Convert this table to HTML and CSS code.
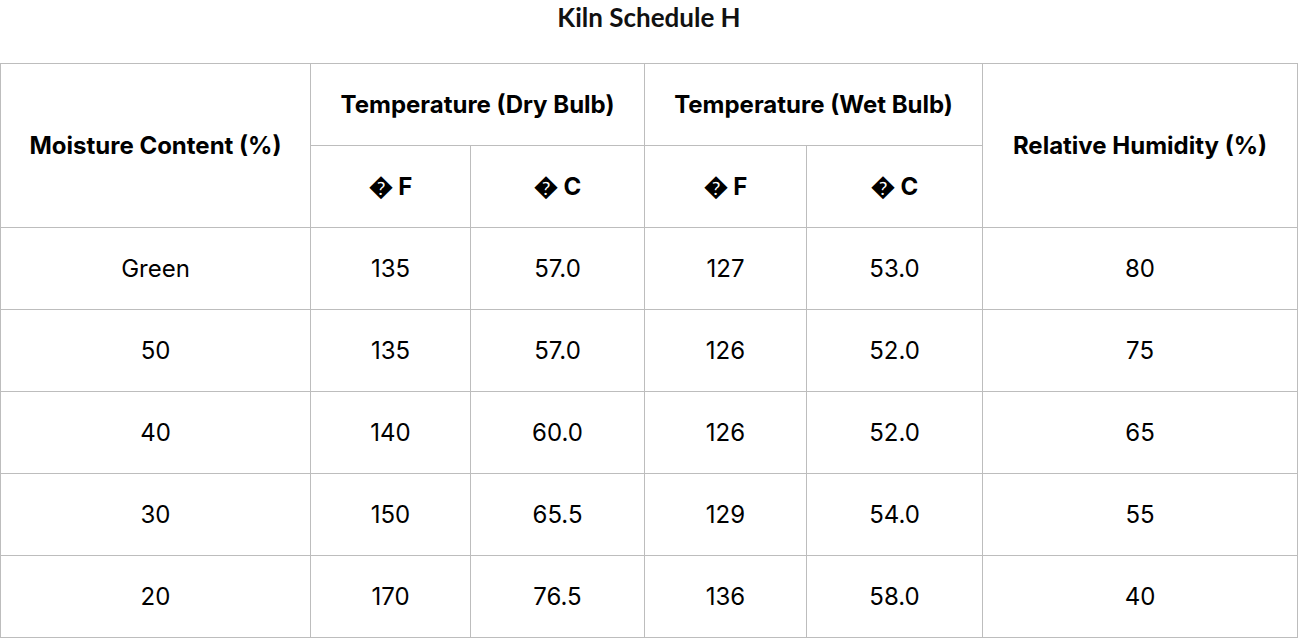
FILE: index.html
```html
<!DOCTYPE html>
<html lang="en">
<head>
<meta charset="utf-8">
<title>Kiln Schedule H</title>
<link rel="stylesheet" href="styles.css">
</head>
<body>
<h1 class="title">Kiln Schedule H</h1>
<table class="kiln">
  <colgroup>
    <col class="c-mc">
    <col class="c-df">
    <col class="c-dc">
    <col class="c-wf">
    <col class="c-wc">
    <col class="c-rh">
  </colgroup>
  <thead>
    <tr>
      <th rowspan="2">Moisture Content (%)</th>
      <th colspan="2">Temperature (Dry Bulb)</th>
      <th colspan="2">Temperature (Wet Bulb)</th>
      <th rowspan="2">Relative Humidity (%)</th>
    </tr>
    <tr>
      <th>&#xFFFD; F</th>
      <th>&#xFFFD; C</th>
      <th>&#xFFFD; F</th>
      <th>&#xFFFD; C</th>
    </tr>
  </thead>
  <tbody>
    <tr><td>Green</td><td>135</td><td>57.0</td><td>127</td><td>53.0</td><td>80</td></tr>
    <tr><td>50</td><td>135</td><td>57.0</td><td>126</td><td>52.0</td><td>75</td></tr>
    <tr><td>40</td><td>140</td><td>60.0</td><td>126</td><td>52.0</td><td>65</td></tr>
    <tr><td>30</td><td>150</td><td>65.5</td><td>129</td><td>54.0</td><td>55</td></tr>
    <tr><td>20</td><td>170</td><td>76.5</td><td>136</td><td>58.0</td><td>40</td></tr>
  </tbody>
</table>
</body>
</html>
```
FILE: styles.css
```css
html, body {
  margin: 0;
  padding: 0;
  background: #ffffff;
}
body {
  font-family: Inter, "Liberation Sans", sans-serif;
  color: #000000;
}
.title {
  margin: 0;
  height: 63px;
  padding-top: 2px;
  box-sizing: border-box;
  text-align: center;
  font-family: Lato, "Noto Sans", sans-serif;
  font-size: 26px;
  font-weight: 700;
  line-height: 30px;
  color: #111111;
}
.kiln {
  border-collapse: collapse;
  width: 1297px;
  table-layout: fixed;
}
.c-mc { width: 310px; }
.c-df { width: 160px; }
.c-dc { width: 174px; }
.c-wf { width: 162px; }
.c-wc { width: 176px; }
.c-rh { width: 315px; }
.kiln th,
.kiln td {
  border: 1px solid #bdbdbd;
  height: 81px;
  padding: 0;
  text-align: center;
  vertical-align: middle;
  font-size: 24px;
  line-height: 28px;
}
.kiln th {
  font-weight: 700;
}
.kiln td {
  font-weight: 400;
}
```
